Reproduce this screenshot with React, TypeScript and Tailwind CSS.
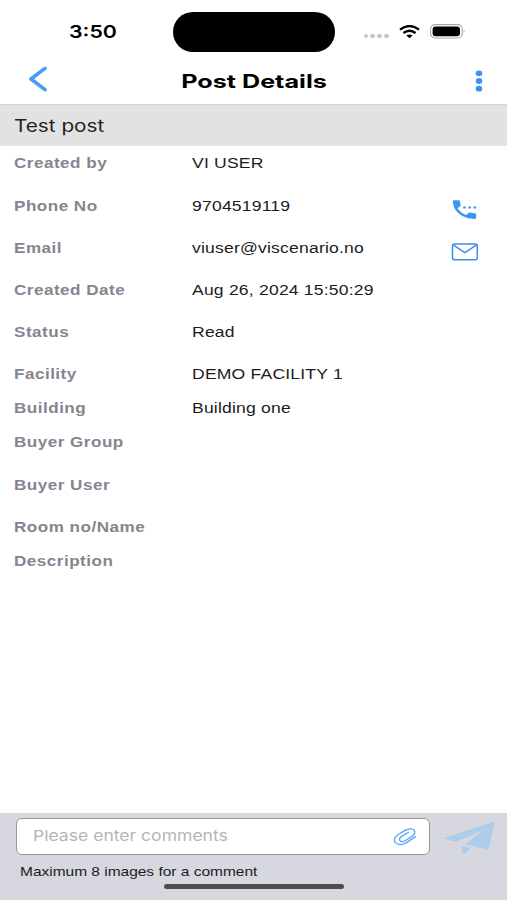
import { useState } from "react";
import { MdSettingsPhone } from "react-icons/md";
import clsx from "clsx";

type Row = {
  label: string;
  value?: string;
  compact?: boolean;
  icon?: "phone" | "mail";
};

const rows: Row[] = [
  { label: "Created by", value: "VI USER" },
  { label: "Phone No", value: "9704519119", icon: "phone" },
  { label: "Email", value: "viuser@viscenario.no", icon: "mail" },
  { label: "Created Date", value: "Aug 26, 2024 15:50:29" },
  { label: "Status", value: "Read" },
  { label: "Facility", value: "DEMO FACILITY 1", compact: true },
  { label: "Building", value: "Building one", compact: true },
  { label: "Buyer Group" },
  { label: "Buyer User" },
  { label: "Room no/Name", compact: true },
  { label: "Description" },
];

const StatusBar = () => (
  <div className="flex h-[52px] items-start pt-3">
    <div className="w-[173px] pt-[6px] pl-[69px]">
      <span className="inline-block origin-left scale-x-[1.22] font-['Inter'] text-[17.5px] leading-7 font-semibold">
        3:50
      </span>
    </div>
    <div className="h-[39.5px] w-[162px] rounded-full bg-black" />
    <div className="mt-[22px] ml-[28.5px] flex gap-[2.6px]">
      {[0, 1, 2, 3].map((i) => (
        <span key={i} className="size-[4.4px] rounded-full bg-[#c6c6c8]" />
      ))}
    </div>
    <svg
      viewBox="0 0 21 14"
      className="mt-[12.5px] ml-[10px] h-[14px] w-[21px]"
      fill="none"
      stroke="#000"
    >
      <path d="M1 4.6Q10.5-2.4 20 4.6" strokeWidth="2.4" />
      <path d="M4.4 8Q10.5 3.4 16.6 8" strokeWidth="2.3" />
      <path d="M7.4 10.6Q10.5 8.4 13.6 10.6L10.5 13.3Z" fill="#000" stroke="none" />
    </svg>
    <svg viewBox="0 0 36 15" className="mt-[12.3px] ml-[10px] h-[15px] w-[36px]">
      <rect x=".6" y=".6" width="31.6" height="13.4" rx="4.5" fill="#fff" stroke="#a9a9ab" strokeWidth="1.1" />
      <rect x="2.6" y="2.4" width="27.4" height="9.8" rx="3" fill="#000" />
      <path d="M33.6 5.6Q35.6 7.2 33.6 9Z" fill="#a9a9ab" />
    </svg>
  </div>
);

const MailIcon = () => (
  <svg
    viewBox="0 0 28 18"
    className="h-[18px] w-[28px]"
    fill="none"
    stroke="#3b8cf5"
    strokeWidth="1.5"
    strokeLinejoin="round"
  >
    <rect x="1.5" y="1.1" width="24.8" height="15.6" rx="2" />
    <path d="M2.5 2.2L13.9 9.6L25.3 2.2" />
  </svg>
);

const DetailRow = ({ label, value, compact, icon }: Row) => (
  <div className={clsx("flex items-start pl-[14px]", compact ? "h-[34px]" : "h-[42.2px]")}>
    <div className="w-[177.5px] leading-[34px]">
      <span className="inline-block origin-left scale-x-[1.22] text-[14px] font-bold tracking-[0.4px] whitespace-nowrap text-[#85858f]">
        {label}
      </span>
    </div>
    <div className="w-[257.5px] leading-[34px]">
      <span className="inline-block origin-left scale-x-[1.255] text-[14px] tracking-[0.15px] whitespace-nowrap text-[#1c1c1e]">
        {value}
      </span>
    </div>
    {icon === "phone" && (
      <button type="button" aria-label="Call" className="mt-[8.8px]">
        <MdSettingsPhone
          preserveAspectRatio="none"
          className="h-[25px] w-[31px] text-[#3d96f0]"
        />
      </button>
    )}
    {icon === "mail" && (
      <button type="button" aria-label="Send email" className="mt-[12.5px] ml-[1.5px]">
        <MailIcon />
      </button>
    )}
  </div>
);

const App = () => {
  const [comment, setComment] = useState("");

  return (
    <div className="flex h-[900px] w-[507px] flex-col overflow-hidden bg-white font-['Liberation_Sans',sans-serif]">
      <StatusBar />

      <header className="flex h-[52px] items-center pr-[24px] pl-[28px]">
        <button type="button" aria-label="Back" className="w-[20px]">
          <svg viewBox="0 0 20 26" className="mt-[2px] h-[26px] w-[20px]">
            <path
              d="M17 2.4L3 13L17 23.6"
              fill="none"
              stroke="#4a9cf5"
              strokeWidth="3.7"
              strokeLinecap="round"
              strokeLinejoin="round"
            />
          </svg>
        </button>
        <h1 className="mt-[5px] mr-[15px] flex-1 scale-x-[1.36] text-center font-['Inter'] text-[18.5px] leading-6 font-bold">
          Post Details
        </h1>
        <button type="button" aria-label="More">
          <svg viewBox="0 0 8 22" className="mt-[5px] h-[22px] w-[8px]" fill="#3d93f2">
            <ellipse cx="4" cy="3.3" rx="3.3" ry="2.9" />
            <ellipse cx="4" cy="11" rx="3.3" ry="2.9" />
            <ellipse cx="4" cy="18.7" rx="3.3" ry="2.9" />
          </svg>
        </button>
      </header>

      <div className="h-[42px] border-t border-[#d2d2d2] bg-[#e2e2e2] pl-[14px] leading-[42px]">
        <span className="inline-block origin-left scale-x-[1.22] font-['Inter'] text-[17px] text-[#1f1f1f]">
          Test post
        </span>
      </div>

      <main className="flex flex-1 flex-col pt-[0.4px]">
        {rows.map((row) => (
          <DetailRow key={row.label} {...row} />
        ))}
      </main>

      <footer className="flex h-[87px] flex-col bg-[#d7d7df]">
        <div className="flex pt-[5px] pl-[16px]">
          <div className="flex h-[37px] w-[414px] items-center rounded-[6px] border-[1.5px] border-[#97979b] bg-white pr-[12px] pl-[16px]">
            <input
              value={comment}
              onChange={(e) => setComment(e.target.value)}
              placeholder="Please enter comments"
              className="w-[280px] origin-left scale-x-[1.17] font-['Inter'] text-[15px] outline-none placeholder:text-[#b5b5b8]"
            />
            <button type="button" aria-label="Attach" className="ml-auto">
              <svg
                viewBox="0 0 24 18"
                className="h-[18px] w-[24px]"
                fill="none"
                stroke="#5aa5f7"
                strokeWidth="1.3"
                strokeLinecap="round"
              >
                <path d="M22.6 8.6L13.6 14.6C9.4 17.2 4.2 17.4 2.2 14.4C.4 11.6 2 8.6 5.6 6.2L11.6 2.6C15.4 .4 19.6 .2 21.2 2.4C22.6 4.5 21.4 6.8 18.6 8.6L13 12.2C10.4 13.8 7.8 14 6.8 12.4C5.9 10.8 7 9.4 9 8.1L15.8 4.2" />
              </svg>
            </button>
          </div>
          <button type="button" aria-label="Send" className="ml-[12px]">
            <svg viewBox="0 0 54 36" className="h-[36px] w-[54px]" fill="#acccea">
              <path d="M52.8 2.6L1.3 19.2L6.6 21.2L15.4 22.8L37.6 12.2L40.4 12L23.2 25.6L46.6 30.8Z" />
              <path d="M20 27L28.6 28.8L25 33.4L19.8 34.2Z" />
            </svg>
          </button>
        </div>
        <p className="mt-[7px] ml-[20px] origin-left scale-x-[1.19] text-[13px] leading-5 whitespace-nowrap text-[#1c1c1e]">
          Maximum 8 images for a comment
        </p>
        <div className="mt-[2px] ml-[164px] h-[5px] w-[180px] rounded-full bg-[#4d4d51]" />
      </footer>
    </div>
  );
};

export default App;
